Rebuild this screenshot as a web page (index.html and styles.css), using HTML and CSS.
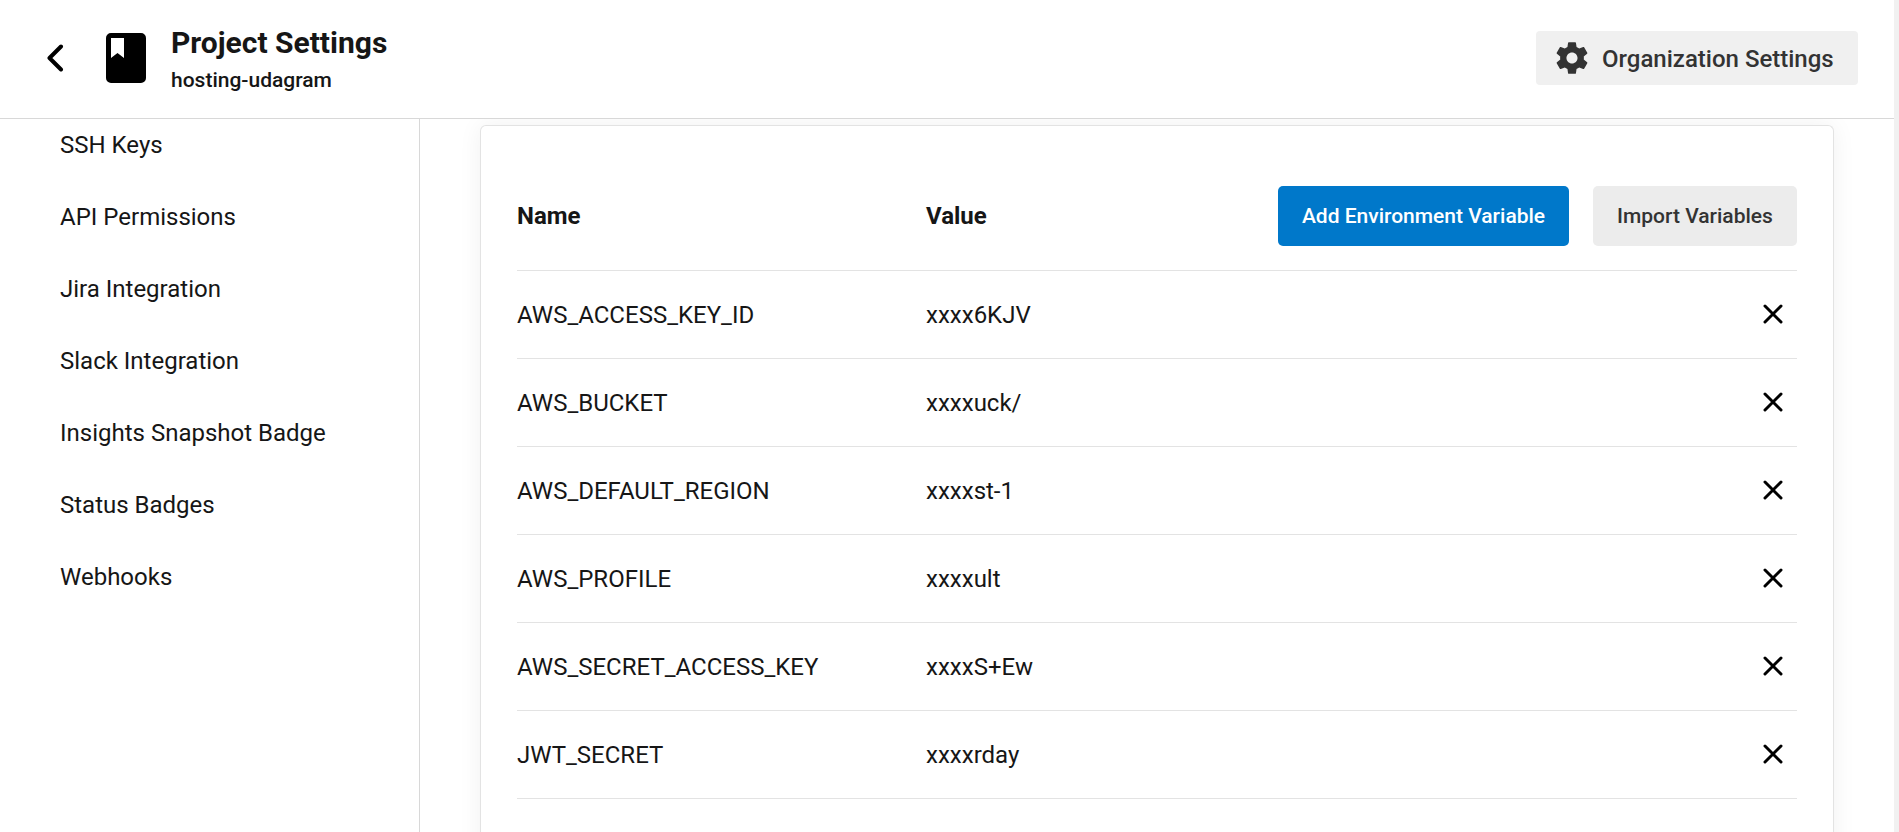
FILE: index.html
```html
<!DOCTYPE html>
<html lang="en">
<head>
<meta charset="utf-8">
<title>Project Settings</title>
<link rel="stylesheet" href="styles.css">
</head>
<body>
<div class="page">
  <div class="main-col">
  <header class="topbar">
    <div class="title-group">
      <button class="back" aria-label="Back">
        <svg width="18" height="28" viewBox="0 0 18 28"><path d="M15 2.5 3.5 14 15 25.500" fill="none" stroke="#000" stroke-width="4" stroke-linecap="round" stroke-linejoin="round"/></svg>
      </button>
      <svg class="book" width="40" height="50" viewBox="0 0 40 50"><path fill="#000" fill-rule="evenodd" d="M5 0h30a5 5 0 0 1 5 5v40a5 5 0 0 1-5 5H5a5 5 0 0 1-5-5V5a5 5 0 0 1 5-5Zm0 5v20l6.500-5 6.500 5V5Z"/></svg>
      <div class="titles">
        <h1>Project Settings</h1>
        <div class="project">hosting-udagram</div>
      </div>
    </div>
    <button class="org-btn">
      <svg width="38" height="38" viewBox="0 0 24 24"><path fill="#333" d="M19.430 12.980c.04-.32.07-.64.07-.98s-.03-.66-.07-.98l2.110-1.650c.19-.15.24-.42.12-.64l-2-3.460c-.12-.22-.39-.3-.61-.22l-2.490 1c-.52-.4-1.080-.73-1.690-.98l-.38-2.650A.488.488 0 0 0 14 2h-4c-.25 0-.46.18-.49.42l-.38 2.650c-.61.25-1.170.59-1.690.98l-2.490-1c-.23-.09-.49 0-.61.22l-2 3.460c-.13.22-.07.49.12.64l2.110 1.650c-.04.32-.07.65-.07.98s.03.66.07.98l-2.110 1.650c-.19.15-.24.42-.12.64l2 3.460c.12.22.39.3.61.22l2.490-1c.52.4 1.080.73 1.690.98l.38 2.650c.03.24.24.42.49.42h4c.25 0 .46-.18.49-.42l.38-2.650c.61-.25 1.170-.59 1.690-.98l2.490 1c.23.09.49 0 .61-.22l2-3.460c.12-.22.07-.49-.12-.64l-2.110-1.650ZM12 15.500c-1.930 0-3.500-1.570-3.500-3.500s1.570-3.500 3.500-3.500 3.500 1.570 3.500 3.500-1.570 3.500-3.500 3.500Z"/></svg>
      <span>Organization Settings</span>
    </button>
  </header>
  <div class="body">
    <nav class="sidebar">
      <a>SSH Keys</a>
      <a>API Permissions</a>
      <a>Jira Integration</a>
      <a>Slack Integration</a>
      <a>Insights Snapshot Badge</a>
      <a>Status Badges</a>
      <a>Webhooks</a>
    </nav>
    <main class="content">
      <section class="card">
        <div class="row head">
          <div class="col-name">Name</div>
          <div class="col-value">Value</div>
          <div class="actions">
            <button class="btn primary">Add Environment Variable</button>
            <button class="btn secondary">Import Variables</button>
          </div>
        </div>
        <div class="row"><div class="col-name">AWS_ACCESS_KEY_ID</div><div class="col-value">xxxx6KJV</div><svg class="x" width="20" height="20" viewBox="0 0 20 20"><path d="M2 2l16 16M18 2 2 18"/></svg></div>
        <div class="row"><div class="col-name">AWS_BUCKET</div><div class="col-value">xxxxuck/</div><svg class="x" width="20" height="20" viewBox="0 0 20 20"><path d="M2 2l16 16M18 2 2 18"/></svg></div>
        <div class="row"><div class="col-name">AWS_DEFAULT_REGION</div><div class="col-value">xxxxst-1</div><svg class="x" width="20" height="20" viewBox="0 0 20 20"><path d="M2 2l16 16M18 2 2 18"/></svg></div>
        <div class="row"><div class="col-name">AWS_PROFILE</div><div class="col-value">xxxxult</div><svg class="x" width="20" height="20" viewBox="0 0 20 20"><path d="M2 2l16 16M18 2 2 18"/></svg></div>
        <div class="row"><div class="col-name">AWS_SECRET_ACCESS_KEY</div><div class="col-value">xxxxS+Ew</div><svg class="x" width="20" height="20" viewBox="0 0 20 20"><path d="M2 2l16 16M18 2 2 18"/></svg></div>
        <div class="row"><div class="col-name">JWT_SECRET</div><div class="col-value">xxxxrday</div><svg class="x" width="20" height="20" viewBox="0 0 20 20"><path d="M2 2l16 16M18 2 2 18"/></svg></div>
      </section>
    </main>
  </div>
  </div>
  <div class="scrollbar"></div>
</div>
</body>
</html>
```
FILE: styles.css
```css
* { box-sizing: border-box; }
html, body { margin: 0; height: 100%; overflow: hidden; }
body { font-family: Roboto, "Liberation Sans", sans-serif; color: #161616; background: #fff; }
button { font-family: inherit; border: 0; cursor: pointer; }
.page { height: 832px; display: flex; }
.main-col { flex: 1; min-width: 0; display: flex; flex-direction: column; }
.topbar { height: 119px; flex: none; border-bottom: 1px solid #d8d8d8; display: flex; align-items: center; justify-content: space-between; padding: 0 36px 2px 46px; }
.title-group { display: flex; align-items: center; }
.back { background: none; padding: 0; width: 18px; height: 28px; display: block; margin-right: 42px; }
.back svg { display: block; }
.book { display: block; margin-right: 25px; }
.titles { display: flex; flex-direction: column; }
h1 { margin: 0; font-size: 30px; line-height: 38px; font-weight: 700; }
.project { font-size: 21px; line-height: 26px; font-weight: 500; margin-top: 5px; }
.org-btn { height: 54px; width: 322px; background: #f0f0f0; border-radius: 4px; display: flex; align-items: center; padding: 1px 0 0 17px; gap: 11px; font-size: 24px; font-weight: 500; color: #333; }
.org-btn svg { flex: none; margin-top: -1px; }
.body { flex: 1; min-height: 0; display: flex; }
.sidebar { width: 420px; flex: none; border-right: 1px solid #d8d8d8; overflow: hidden; display: flex; flex-direction: column; padding-left: 60px; }
.sidebar a { height: 72px; flex: none; display: flex; align-items: center; font-size: 24px; color: #161616; }
.sidebar a:first-child { margin-top: -10px; }
.content { flex: 1; min-width: 0; padding: 6px 60px 0 60px; overflow: hidden; }
.card { background: #fff; border: 1px solid #e3e3e3; border-bottom: 0; border-radius: 6px 6px 0 0; padding: 0 36px 0 36px; min-height: 800px; box-shadow: 0 0 24px rgba(0,0,0,.06); }
.row { height: 88px; display: flex; align-items: center; border-bottom: 1px solid #e3e3e3; font-size: 24px; }
.row.head { height: 145px; padding-top: 35px; font-weight: 700; }
.col-name { width: 409px; flex: none; }
.col-value { flex: 1; }
.actions { display: flex; gap: 24px; }
.btn { height: 60px; border-radius: 5px; font-size: 21px; font-weight: 500; padding: 0; }
.primary { width: 291px; background: #0078ca; color: #fff; }
.secondary { width: 204px; background: #ececec; color: #333; }
.x { flex: none; margin: 0 14px 2px 0; fill: none; stroke: #000; stroke-width: 3; stroke-linecap: round; }
.scrollbar { width: 5px; flex: none; background: #f1f1f1; }
```
